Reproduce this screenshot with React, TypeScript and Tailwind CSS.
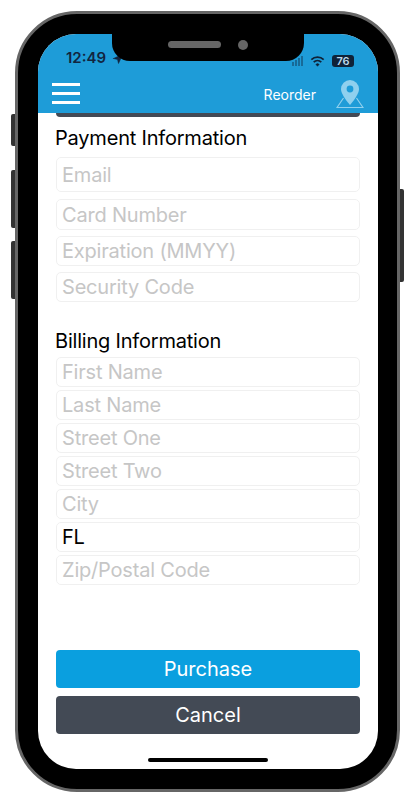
import { Navigation } from "lucide-react";

function Field({ label, value, h = "h-[30px]" }: { label?: string; value?: string; h?: string }) {
  return (
    <div className={`${h} flex items-center rounded-[5px] border border-[#f0f0f0] pl-[5px] text-[20px] tracking-[-0.2px]`}>
      {value ? <span className="text-black">{value}</span> : <span className="text-[#c6c6c6]">{label}</span>}
    </div>
  );
}

function StatusBar() {
  return (
    <div className="flex h-[45px] items-end justify-between pb-[12px] pl-[28px] pr-[24px]">
      <div className="flex items-center gap-[7px] text-[15px] font-semibold leading-[18px] text-[#12253f]">
        12:49
        <Navigation size={12} fill="#12253f" strokeWidth={1} className="-ml-[1px] mt-[2px]" />
      </div>
      <div className="flex items-center gap-[7px]">
        <div className="flex items-end gap-[1px] opacity-40">
          <div className="h-[4px] w-[2px] bg-[#0f2238]" />
          <div className="h-[6px] w-[2px] bg-[#0f2238]" />
          <div className="h-[8px] w-[2px] bg-[#0f2238]" />
          <div className="h-[10px] w-[2px] bg-[#0f2238]" />
        </div>
        <svg width="15" height="12" viewBox="0 0 17 13" fill="none" stroke="#0f2238" strokeWidth="2">
          <path d="M1.5 5a10 10 0 0 1 14 0" />
          <path d="M4.2 7.8a6.2 6.2 0 0 1 8.6 0" />
          <path d="M8.5 12.5 6.6 10.4a2.7 2.7 0 0 1 3.8 0Z" fill="#0f2238" strokeWidth="0.5" />
        </svg>
        <div className="flex h-[12px] w-[22px] items-center justify-center rounded-[3px] bg-[#0f2238] text-[11px] font-semibold leading-none text-[#bcd8ea]">
          76
        </div>
      </div>
    </div>
  );
}

function Header() {
  return (
    <div className="bg-[#1e9cd8]">
      <StatusBar />
      <div className="flex h-[34px] items-start justify-between px-[14px]">
        <div className="mt-[4px] flex w-[28px] flex-col gap-[6.5px]">
          <div className="h-[2.5px] bg-white" />
          <div className="h-[2.5px] bg-white" />
          <div className="h-[2.5px] bg-white" />
        </div>
        <div className="flex items-start gap-[20px]">
          <span className="mt-[7px] text-[14px] leading-[17px] text-white">Reorder</span>
          <svg width="28" height="29" viewBox="0 0 28 29" fill="none">
            <path d="M7.5 19 1 28.5h26L20.5 19" stroke="#8fd0ee" strokeWidth="1.2" />
            <path d="M14 1a9 9 0 0 0-9 9c0 6 9 16 9 16s9-10 9-16a9 9 0 0 0-9-9Z" fill="#8fd0ee" />
            <circle cx="14" cy="10" r="3.4" fill="#1e9cd8" />
          </svg>
        </div>
      </div>
    </div>
  );
}

export default function App() {
  return (
    <div className="h-[800px] w-[414px] overflow-hidden bg-white pl-[15px] pt-[11px] font-['Inter',sans-serif]">
      <div className="relative h-[781px] w-[385px] rounded-[62px] border-[3px] border-[#666666] bg-black py-[20px] pl-[20px]">
        {/* side buttons */}
        <div className="absolute -left-[7px] top-[100px] h-[32px] w-[4px] rounded-l-[2px] bg-[#333333]" />
        <div className="absolute -left-[7px] top-[156px] h-[58px] w-[4px] rounded-l-[2px] bg-[#333333]" />
        <div className="absolute -left-[7px] top-[227px] h-[58px] w-[4px] rounded-l-[2px] bg-[#333333]" />
        <div className="absolute -right-[7px] top-[175px] h-[93px] w-[4px] rounded-r-[2px] bg-[#333333]" />

        <div className="relative flex h-[735px] w-[340px] flex-col overflow-hidden rounded-[38px] bg-white">
          {/* notch */}
          <div className="absolute left-[74px] top-0 z-10 flex h-[27px] w-[192px] items-start justify-center gap-[17px] rounded-b-[18px] bg-black pt-[6px]">
            <div className="mt-[1px] h-[7px] w-[53px] rounded-full bg-[#666666]" />
            <div className="h-[10px] w-[10px] rounded-full bg-[#666666]" />
          </div>

          <Header />

          <div className="flex flex-1 flex-col px-[18px]">
            <div className="h-[4px] rounded-b-[4px] bg-[#434a55]" />
            <h2 className="-ml-[1px] mt-[9px] text-[20px] leading-[24px] tracking-[-0.2px] text-black">Payment Information</h2>
            <div className="mt-[7px] flex flex-col">
              <Field label="Email" h="h-[35px]" />
              <div className="mt-[7px]">
                <Field label="Card Number" h="h-[31px]" />
              </div>
              <div className="mt-[6px] flex flex-col gap-[6px]">
                <Field label="Expiration (MMYY)" />
                <Field label="Security Code" />
              </div>
            </div>

            <h2 className="-ml-[1px] mt-[27px] text-[20px] leading-[24px] tracking-[-0.2px] text-black">Billing Information</h2>
            <div className="mt-[4px] flex flex-col gap-[3px]">
              <Field label="First Name" />
              <Field label="Last Name" />
              <Field label="Street One" />
              <Field label="Street Two" />
              <Field label="City" />
              <Field value="FL" />
              <Field label="Zip/Postal Code" />
            </div>

            <div className="mt-[65px] flex flex-col gap-[8px]">
              <button className="h-[38px] rounded-[4px] bg-[#0a9fdf] text-[20px] text-white">Purchase</button>
              <button className="h-[38px] rounded-[4px] bg-[#434a55] text-[20px] text-white">Cancel</button>
            </div>

            <div className="mx-auto mt-[24px] h-[4px] w-[120px] rounded-full bg-black" />
          </div>
        </div>
      </div>
    </div>
  );
}
